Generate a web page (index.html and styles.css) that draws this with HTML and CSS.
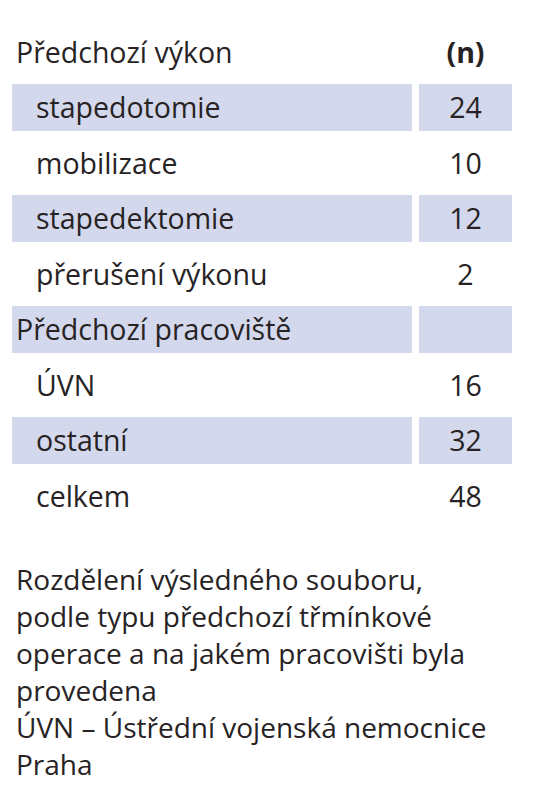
FILE: index.html
```html
<!DOCTYPE html>
<html lang="cs">
<head>
    <meta charset="UTF-8">
    <meta name="viewport" content="width=device-width, initial-scale=1.0">
    <title>Předchozí výkon</title>
    <link rel="stylesheet" href="styles.css">
</head>
<body>
    <div class="data-table">
        <div class="cell group">Předchozí výkon</div>
        <div class="cell num head">(n)</div>

        <div class="cell item shaded">stapedotomie</div>
        <div class="cell num shaded">24</div>

        <div class="cell item">mobilizace</div>
        <div class="cell num">10</div>

        <div class="cell item shaded">stapedektomie</div>
        <div class="cell num shaded">12</div>

        <div class="cell item">přerušení výkonu</div>
        <div class="cell num">2</div>

        <div class="cell group shaded">Předchozí pracoviště</div>
        <div class="cell num shaded"></div>

        <div class="cell item">ÚVN</div>
        <div class="cell num">16</div>

        <div class="cell item shaded">ostatní</div>
        <div class="cell num shaded">32</div>

        <div class="cell item">celkem</div>
        <div class="cell num">48</div>
    </div>

    <p class="caption">
        Rozdělení výsledného souboru,<br>
        podle typu předchozí třmínkové<br>
        operace a na jakém pracovišti byla<br>
        provedena<br>
        ÚVN – Ústřední vojenská nemocnice<br>
        Praha
    </p>
</body>
</html>
```

FILE: styles.css
```css
body {
    margin: 0;
    padding: 0;
    background: #fff;
    color: #272324;
    font-family: "Open Sans", sans-serif;
}

.data-table {
    display: grid;
    grid-template-columns: 400px 93px;
    grid-auto-rows: 47px;
    column-gap: 7px;
    row-gap: 8.5px;
    padding: 28.5px 0 0 12px;
}

.cell {
    font-size: 28.5px;
    line-height: 47px;
    white-space: nowrap;
}

.shaded {
    background: #d4d8ec;
}

.group {
    padding-left: 4px;
}

.item {
    padding-left: 24px;
}

.num {
    text-align: center;
}

.head {
    font-weight: bold;
}

.caption {
    margin: 41px 0 0 0;
    padding-left: 16px;
    font-size: 28px;
    line-height: 37px;
}
```
